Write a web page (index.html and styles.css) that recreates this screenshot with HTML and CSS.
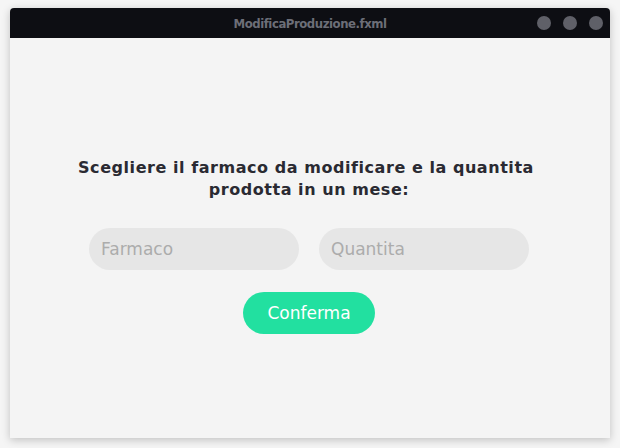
FILE: index.html
```html
<!DOCTYPE html>
<html>
<head>
<meta charset="utf-8">
<link rel="stylesheet" href="styles.css">
</head>
<body>
<div class="window">
  <div class="titlebar">
    <span class="title">ModificaProduzione.fxml</span>
    <div class="dots"><span class="dot"></span><span class="dot"></span><span class="dot"></span></div>
  </div>
  <div class="content">
    <h1 class="heading"><span class="line first">Scegliere il farmaco da modificare e la quantita</span><span class="line">prodotta in un mese:</span></h1>
    <div class="fields">
      <input class="field" type="text" placeholder="Farmaco">
      <input class="field" type="text" placeholder="Quantita">
    </div>
    <button class="confirm">Conferma</button>
  </div>
</div>
</body>
</html>
```
FILE: styles.css
```css
html, body {
  margin: 0;
  padding: 0;
  background: #f5f5f5;
  width: 620px;
  height: 448px;
  overflow: hidden;
}
body {
  padding: 8px 10px 0 10px;
  box-sizing: border-box;
  font-family: "DejaVu Sans", sans-serif;
}
.window {
  width: 600px;
  height: 430px;
  background: #f4f4f4;
  border-radius: 4px 4px 0 0;
  box-shadow: 0 2px 8px rgba(0,0,0,0.22);
  display: flex;
  flex-direction: column;
  overflow: hidden;
}
.titlebar {
  height: 30px;
  background: #0d0e13;
  position: relative;
  display: flex;
  align-items: center;
  justify-content: center;
  flex-shrink: 0;
}
.title {
  font-family: "DejaVu Sans Condensed", "DejaVu Sans", sans-serif;
  font-weight: bold;
  font-size: 13px;
  color: #6c6e78;
  letter-spacing: -0.45px;
}
.dots {
  position: absolute;
  right: 7px;
  top: 8px;
  display: flex;
  gap: 12px;
}
.dot {
  width: 14px;
  height: 14px;
  border-radius: 50%;
  background: #5f6068;
}
.content {
  flex: 1;
  display: flex;
  flex-direction: column;
  align-items: center;
  padding-top: 119px;
  padding-right: 2px;
}
.heading {
  margin: 0;
  font-size: 16px;
  font-weight: bold;
  line-height: 22px;
  color: #2a2a32;
  text-align: center;
  letter-spacing: 0.55px;
  display: flex;
  flex-direction: column;
  align-items: center;
}
.line {
  display: block;
}
.line.first {
  padding-right: 6px;
}
.fields {
  display: flex;
  gap: 20px;
  margin-top: 27px;
}
.field {
  width: 210px;
  height: 42px;
  box-sizing: border-box;
  border: none;
  border-radius: 21px;
  background: #e6e6e6;
  padding: 0 12px;
  font-family: "DejaVu Sans", sans-serif;
  font-size: 17px;
  color: #333;
  outline: none;
}
.field::placeholder {
  color: #acacac;
}
.confirm {
  margin-top: 22px;
  width: 132px;
  height: 42px;
  border: none;
  border-radius: 21px;
  background: #22e0a0;
  color: #ffffff;
  font-family: "DejaVu Sans", sans-serif;
  font-size: 17px;
  padding: 0;
}
```
